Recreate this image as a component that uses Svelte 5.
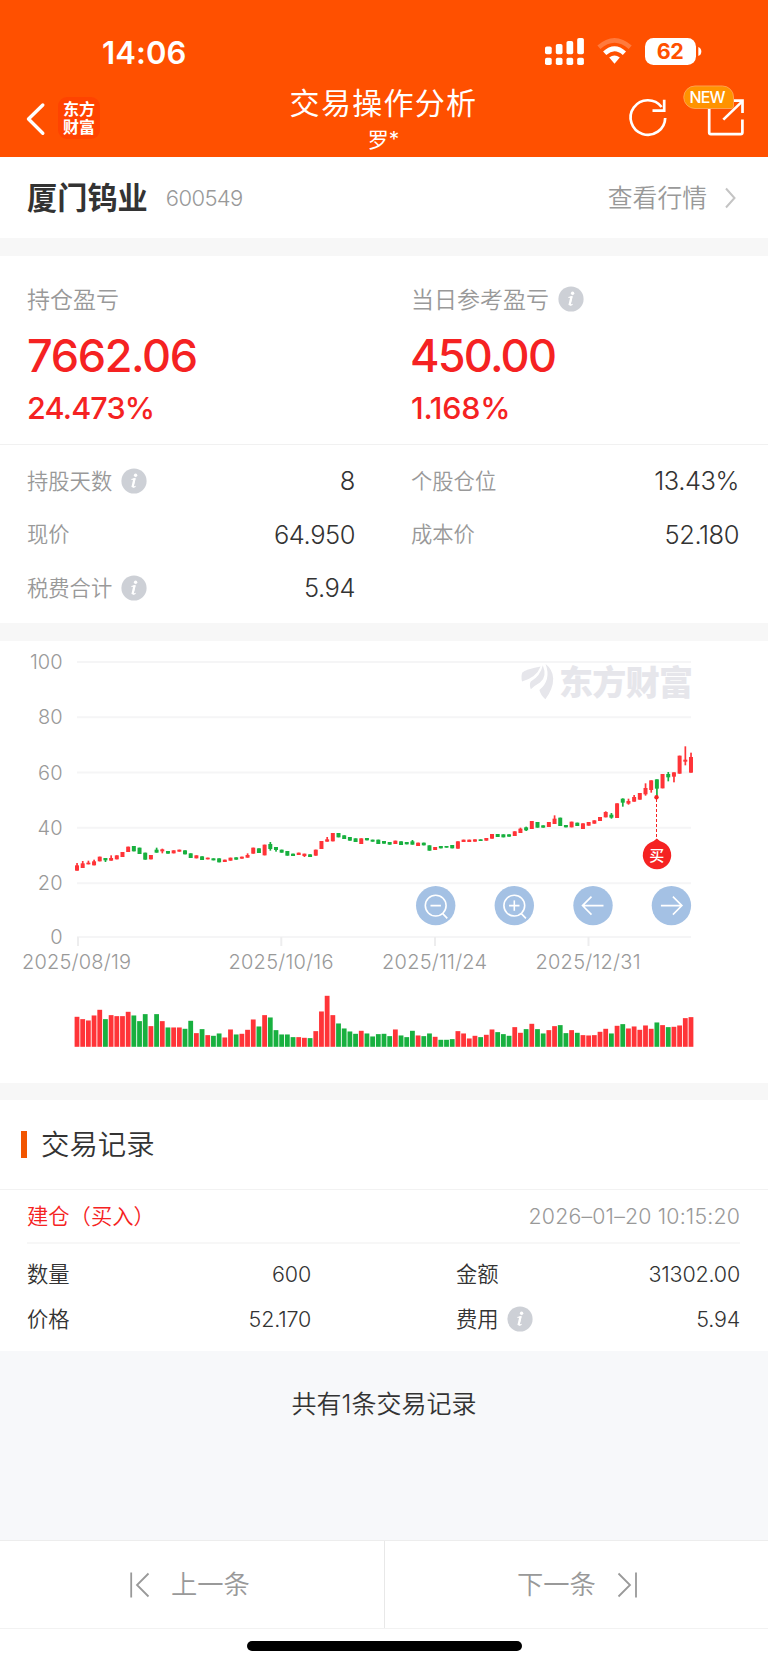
<script>
  // Each day: [direction, volume height, body top, body bottom, wick top, wick bottom]
  // Vertical values are in thirds of a pixel measured from the chart's top edge.
  const days = [
    ['r', 90, 676, 692, 669], ['r', 83, 670, 684, 663], ['r', 79, 668, 673, 662], ['r', 94, 664, 676, 659], ['r', 111, 650, 664],
    ['g', 83, 654, 661, 654, 666], ['r', 95, 654, 662, 646], ['r', 92, 646, 658], ['r', 92, 636, 651], ['r', 105, 620, 636],
    ['g', 94, 618, 634], ['g', 77, 623, 642], ['g', 98, 638, 659], ['r', 62, 645, 658], ['g', 98, 629, 638, 623],
    ['r', 77, 628, 634, 626, 640], ['g', 58, 633, 641], ['r', 58, 631, 640], ['r', 58, 629, 635], ['g', 54, 631, 643],
    ['g', 78, 640, 654], ['r', 41, 646, 655], ['g', 53, 649, 660], ['r', 35, 653, 658], ['g', 33, 655, 661],
    ['g', 40, 655, 667], ['r', 28, 659, 666], ['r', 52, 653, 662], ['g', 37, 652, 659], ['r', 39, 650, 656],
    ['r', 51, 645, 653, 640], ['r', 82, 623, 641], ['g', 61, 625, 639], ['r', 95, 614, 646], ['g', 88, 612, 627, 606, 632],
    ['g', 50, 621, 630, 621, 635], ['g', 37, 629, 638], ['g', 37, 633, 647], ['g', 29, 641, 648], ['r', 29, 638, 645],
    ['r', 27, 641, 648, 641, 651], ['g', 26, 643, 651], ['r', 47, 629, 647], ['r', 106, 603, 627], ['r', 153, 598, 605, 591],
    ['r', 95, 579, 604], ['g', 70, 579, 592], ['g', 55, 586, 597], ['g', 46, 591, 602], ['g', 39, 595, 606],
    ['r', 48, 595, 612], ['g', 40, 594, 601], ['g', 31, 599, 605], ['g', 38, 599, 612], ['g', 39, 603, 611],
    ['g', 32, 606, 614], ['r', 52, 602, 612], ['g', 34, 604, 615], ['g', 29, 606, 613], ['g', 48, 604, 614, 600],
    ['r', 34, 608, 618], ['g', 32, 608, 616], ['g', 40, 616, 632], ['r', 30, 621, 630], ['g', 21, 618, 625],
    ['g', 21, 618, 623], ['g', 23, 615, 625], ['r', 47, 604, 626], ['r', 40, 599, 606], ['r', 25, 599, 606],
    ['r', 33, 598, 605], ['g', 29, 598, 603], ['r', 36, 594, 602], ['r', 52, 582, 596], ['g', 44, 582, 591],
    ['g', 38, 583, 592], ['g', 33, 583, 590], ['r', 59, 574, 588], ['r', 42, 566, 579, 563], ['g', 53, 562, 571, 560, 573],
    ['r', 69, 543, 567], ['g', 53, 546, 563], ['g', 40, 556, 563], ['r', 50, 546, 561], ['r', 62, 536, 552, 526],
    ['g', 65, 533, 558], ['g', 41, 555, 562], ['r', 50, 545, 562], ['g', 42, 548, 558], ['r', 35, 550, 567],
    ['r', 34, 546, 557], ['r', 35, 541, 551], ['r', 45, 531, 543], ['r', 54, 516, 532, 514], ['g', 40, 524, 533, 519, 536],
    ['r', 63, 490, 534], ['g', 68, 476, 488, 475, 500], ['r', 55, 483, 491, 476, 494], ['r', 61, 471, 485, 465], ['r', 51, 459, 479],
    ['r', 64, 444, 463, 430, 467], ['r', 54, 421, 450, 421, 458], ['g', 73, 418, 446, 418, 470], ['r', 65, 402, 445],
    ['g', 59, 402, 412, 396, 424], ['r', 60, 397, 410, 397, 427], ['r', 64, 347, 401], ['r', 86, 359, 365, 319, 376], ['r', 89, 351, 398, 338],
  ];
  const ink = { r: '#ff3438', g: '#18b03f' };
  const bars = days.map(([dir, vol, top, bottom, high = top, low = bottom], i) => ({
    x: 77 + i * 5.685, fill: ink[dir], vol: vol / 3,
    top: top / 3, h: (bottom - top) / 3, high: high / 3, hh: (low - high) / 3,
  }));
  const grid = [['100', 22], ['80', 77.3], ['60', 132.6], ['40', 187.7], ['20', 243.2], ['0', 297]];
  const dates = [['2025/08/19', 78, 76.5, 109], ['2025/10/16', 281.3, 281, 105], ['2025/11/24', 435, 434.6, 105], ['2025/12/31', 588.5, 588, 105]];
  const tools = [['minus', 435.7], ['plus', 514.3], ['left', 593], ['right', 671.4]];
  const stats = [
    ['持股天数', '8', true], ['个股仓位', '13.43%', false],
    ['现价', '64.950', false], ['成本价', '52.180', false],
    ['税费合计', '5.94', true],
  ];
  const record = [
    ['数量', '600', false], ['金额', '31302.00', false],
    ['价格', '52.170', false], ['费用', '5.94', true],
  ];
</script>

{#snippet info()}
  <svg class="info" width="26" height="26" viewBox="0 0 26 26">
    <circle cx="13" cy="13" r="12.6" fill="#cdd0d6" />
    <circle cx="14.6" cy="7.2" r="1.7" fill="#fff" />
    <path d="M10.4 11.6 Q12.2 11 14 10.6 L12 18.6 Q12 19.8 14.6 18.2" fill="none" stroke="#fff" stroke-width="1.1" />
    <path d="M13.5 10.6 L11.5 19.2" stroke="#fff" stroke-width="2.2" />
  </svg>
{/snippet}

<div class="app">
  <header>
    <div class="status">
      <span class="time">14:06</span>
      <svg class="signals" width="160" height="30" viewBox="0 0 160 30" fill="#fff">
        <rect x="1" y="9.5" width="6.7" height="7.8" rx="1.8" /><rect x="11.8" y="7" width="6.7" height="10.3" rx="1.8" />
        <rect x="22.5" y="4" width="6.7" height="13.3" rx="1.8" /><rect x="33.2" y="1" width="6.7" height="16.3" rx="1.8" />
        <rect x="1" y="20.7" width="6.7" height="7.4" rx="1.8" /><rect x="11.8" y="20.7" width="6.7" height="7.4" rx="1.8" />
        <rect x="22.5" y="20.7" width="6.7" height="7.4" rx="1.8" /><rect x="33.2" y="20.7" width="6.7" height="7.4" rx="1.8" />
        <path d="M54.9 10.2 Q70.5 -3.6 86.2 10.2" fill="none" stroke="#ff7a3d" stroke-width="4.6" />
        <path d="M60.7 16.3 Q70.5 7.4 80.4 16.3" fill="none" stroke="#fff" stroke-width="4.8" />
        <path d="M65.2 20.6 Q70.5 16.6 75.8 20.6 L70.5 26.8 Z" />
        <rect x="101" y="1" width="51" height="27" rx="8.5" />
        <path d="M154.3 10 Q157.3 11 157.3 14.5 T154.3 19 Z" />
        <text x="126.3" y="22.3" text-anchor="middle" class="charge" textLength="27">62</text>
      </svg>
    </div>
    <div class="bar">
      <svg class="back" width="22" height="36" viewBox="0 0 22 36"><path d="M16.8 4 L2.5 18 L16.8 32.2" fill="none" stroke="#fff" stroke-width="3.4" stroke-linejoin="round" stroke-linecap="round" /></svg>
      <div class="brand"><span>东方</span><span>财富</span></div>
      <div class="heading"><h1>交易操作分析</h1><p>罗*</p></div>
      <svg class="actions" width="126" height="60" viewBox="0 0 126 60" fill="none" stroke="#fff" stroke-width="2.7">
        <path d="M42.2 34 A17.3 17.3 0 1 1 38.6 23" />
        <path d="M29.5 26.7 H41.2 V15.8" />
        <path d="M86.2 22 V48.5 Q86.2 50.2 87.9 50.2 H117.7 Q119.4 50.2 119.4 48.5 V35.5" />
        <path d="M106 16.7 H119.5 V29" /><path d="M100.3 35.6 L119 17.6" />
        <path d="M72 2 H99.5 A11 11 0 0 1 110.5 13 V22 Q110.5 24.5 108 24.5 H72 A11.25 11.25 0 0 1 72 2 Z" fill="#ff9300" stroke="#ff9f4d" stroke-width="1" />
        <text x="84.6" y="19.4" class="new" text-anchor="middle" textLength="36">NEW</text>
      </svg>
    </div>
  </header>

  <section class="stock">
    <h2>厦门钨业</h2><span class="code">600549</span>
    <span class="quote">查看行情</span>
    <svg width="14" height="24" viewBox="0 0 14 24"><path d="M3 2.5 L11.5 12 L3 21.5" fill="none" stroke="#c4c4c4" stroke-width="2" /></svg>
  </section>

  <section class="profit">
    <div><p>持仓盈亏</p><strong>7662.06</strong><b>24.473%</b></div>
    <div><p>当日参考盈亏{@render info()}</p><strong class="day">450.00</strong><b class="dayrate">1.168%</b></div>
  </section>

  <section class="stats">
    {#each stats as [label, value, hint]}
      <div class="pair"><span>{label}{#if hint}{@render info()}{/if}</span><em>{value}</em></div>
    {/each}
  </section>

  <section class="chart">
    <svg width="768" height="442" viewBox="0 1 768 442">
      {#each grid as [label, y]}
        <path d="M77 {y} H691" stroke="#f5f5f6" stroke-width="2" />
        <text x="62.5" y={y + 7} class="axis" text-anchor="end">{label}</text>
      {/each}
      {#each dates as [label, x, center, len]}
        <path d="M{x} 297 V306" stroke="#ededee" stroke-width="2" />
        <text x={center} y="329" class="axis" text-anchor="middle" textLength={len}>{label}</text>
      {/each}
      <g fill="#e6e6eb">
        <path d="M522 41.6 Q520.8 35 522.5 32.5 Q525 29.6 540.6 26.6 Q536.5 37.5 522 41.6 Z" />
        <path d="M530.8 49.3 Q529 44.5 530.8 41.5 Q540.5 36 542.8 25.3 Q547.5 37 540 42.5 Q534 46 530.8 49.3 Z" />
        <path d="M545.6 24 Q552.8 29.5 553.2 38.5 Q553.3 48.5 545.4 59.3 Q540.5 55 539.4 50 Q551.5 40 545.6 24 Z" />
        <text x="559" y="54.7" class="mark" textLength="134">东方财富</text>
      </g>
      {#each bars as b}
        <rect x={b.x - 2} y={b.top} width="4" height={b.h} fill={b.fill} />
        <rect x={b.x - 0.8} y={b.high} width="1.7" height={b.hh} fill={b.fill} />
        <rect x={b.x - 2.4} y={406.8 - b.vol} width="4.8" height={b.vol} fill={b.fill} />
      {/each}
      <path d="M656.5 159 V200" stroke="#f52222" stroke-width="1" stroke-dasharray="3 2" />
      <circle cx="656.5" cy="157.3" r="2.2" fill="#f52222" />
      <path d="M656.8 198.5 Q659.5 201.5 664 202.7 A14.2 14.2 0 1 1 650 202.7 Q654 201.5 656.8 198.5 Z" fill="#f52222" />
      <text x="656.7" y="220.6" class="buy" text-anchor="middle">买</text>
      {#each tools as [kind, x]}
        <g transform="translate({x} 265.6)" fill="none" stroke="#fff" stroke-width="1.6">
          <circle r="19.7" fill="#a4c1e4" stroke="none" />
          {#if kind === 'minus' || kind === 'plus'}
            <circle r="10.4" /><path d="M-5.2 0 H5.2 M6.8 7.8 L11.6 12.8" />
            {#if kind === 'plus'}<path d="M0 -5.2 V5.2" />{/if}
          {:else if kind === 'left'}
            <path d="M10.5 0 H-10 M-1.5 -9 L-10.5 0 L-1.5 9" />
          {:else}
            <path d="M-10.5 0 H10 M1.5 -9 L10.5 0 L1.5 9" />
          {/if}
        </g>
      {/each}
    </svg>
  </section>

  <section class="title"><i></i><h3>交易记录</h3></section>
  <section class="record">
    <div class="trade"><span>建仓（买入）</span><time>2026–01–20 10:15:20</time></div>
    <div class="fields">
      {#each record as [label, value, hint]}
        <div class="pair"><span>{label}{#if hint}{@render info()}{/if}</span><em>{value}</em></div>
      {/each}
    </div>
  </section>

  <div class="summary">共有1条交易记录</div>

  <nav>
    <button>
      <svg width="22" height="28" viewBox="0 0 22 28"><path d="M2.2 1.5 V26.5 M19.5 2.5 L8 14 L19.5 25.5" fill="none" stroke="#999" stroke-width="1.8" /></svg>
      <span>上一条</span>
    </button>
    <button class="next">
      <span>下一条</span>
      <svg width="22" height="28" viewBox="0 0 22 28"><path d="M20 1.5 V26.5 M2.5 2.5 L14 14 L2.5 25.5" fill="none" stroke="#999" stroke-width="1.8" /></svg>
    </button>
  </nav>
  <div class="home"><i></i></div>
</div>

<style>
  :global(body) { margin: 0; background: #fff; }
  .app { width: 768px; height: 1665px; display: flex; flex-direction: column; overflow: hidden; background: #f7f7f7; color: #333; font-family: Inter, "Noto Sans CJK SC", sans-serif; font-weight: 350; line-height: 1; white-space: nowrap; }
  .app * { box-sizing: border-box; flex-shrink: 0; }
  h1, h2, h3, p { margin: 0; font-weight: inherit; }
  em, i { font-style: normal; }
  svg { display: block; }

  header { height: 157px; background: #ff5000; color: #fff; }
  .status { height: 84px; padding: 37px 64px 0 102px; display: flex; justify-content: space-between; }
  .time { font-size: 31px; font-weight: 600; letter-spacing: 0.1px; }
  .charge { font-size: 21.5px; font-weight: 700; fill: #ff5000; }
  .bar { height: 73px; display: grid; grid-template-columns: 32px 42px 1fr 126px; padding: 0 19px 0 26px; }
  .back { margin-top: 17px; }
  .brand { width: 42px; height: 42px; margin-top: 13px; border-radius: 9px; background: #ff4300; display: flex; flex-direction: column; align-items: center; justify-content: center; gap: 2px; font-size: 16px; font-weight: 700; }
  .heading { padding: 4px 0 0 44px; text-align: center; }
  .heading h1 { font-size: 30px; letter-spacing: 1.3px; font-weight: 400; }
  .heading p { margin-top: 11px; font-size: 21px; font-weight: 400; }
  .new { font-size: 16px; font-weight: 500; fill: #fff; stroke: none; }

  .stock { height: 81px; padding: 0 31px 0 27px; display: flex; align-items: center; background: #fff; color: #999; }
  .stock h2 { padding-top: 2px; font-size: 30.2px; font-weight: 600; color: #333; }
  .code { margin-left: 18px; font-size: 22px; letter-spacing: -0.6px; }
  .quote { margin: 0 16px 0 auto; padding-top: 1px; font-size: 24.8px; }

  .profit { height: 189px; margin-top: 18px; padding: 28px 27px 0; background: #fff; display: grid; grid-template-columns: 384px 1fr; border-bottom: 1px solid #f1f1f1; }
  .profit p { height: 32px; display: flex; align-items: center; color: #999; font-size: 23px; }
  .profit p .info { margin-bottom: 2px; }
  .profit strong, .profit b { display: block; color: #f52222; font-weight: 500; }
  .profit strong { margin-top: 17px; font-size: 45px; letter-spacing: -1.35px; }
  .profit .day { margin-left: -1px; letter-spacing: -1.75px; }
  .profit b { margin-top: 15px; font-size: 30.5px; letter-spacing: -0.8px; }
  .profit .dayrate { letter-spacing: -0.2px; }
  .info { margin-left: 9px; }

  .stats { height: 178px; padding: 9px 29px 0 27px; background: #fff; display: grid; grid-template-columns: 328px 328px; column-gap: 56px; grid-auto-rows: 53.6px; align-content: start; }
  .pair { display: flex; align-items: center; justify-content: space-between; }
  .pair span { display: flex; align-items: center; padding-top: 1px; color: #999; font-size: 21.3px; }
  .pair em { font-size: 25.5px; letter-spacing: -0.45px; }

  .chart { height: 442px; margin-top: 18px; background: #fff; }
  .axis { font-size: 20px; font-weight: 350; fill: #999; }
  .mark { font-size: 34px; font-weight: 900; }
  .buy { font-size: 15px; font-weight: 500; fill: #fff; }

  .title { height: 90px; margin-top: 17px; padding-left: 21px; display: flex; align-items: center; background: #fff; border-bottom: 1px solid #f2f2f2; }
  .title i { width: 6px; height: 27px; background: #f25500; }
  .title h3 { margin-left: 14px; padding-top: 1px; font-size: 28.4px; }
  .record { height: 161px; padding: 0 28px 0 27px; background: #fff; }
  .trade { height: 54px; padding-top: 1px; display: flex; align-items: center; justify-content: space-between; border-bottom: 2px solid #f7f7f7; font-size: 21.3px; }
  .trade span { color: #f52222; }
  .trade time { color: #999; letter-spacing: 0.18px; }
  .fields { padding-top: 8px; display: grid; grid-template-columns: 284px 284px; justify-content: space-between; grid-auto-rows: 45px; }
  .fields .pair span { color: #333; padding-top: 0; }
  .fields .pair em { font-size: 21.5px; letter-spacing: -0.2px; }
  .fields .info { margin: 0 0 1px 8px; }

  .summary { height: 189px; padding-top: 41px; text-align: center; background: #f7f8fa; font-size: 25px; }
  nav { height: 89px; display: grid; grid-template-columns: 384px 384px; background: #fff; border-top: 1px solid #ededed; border-bottom: 1px solid #f2f2f2; }
  nav button { display: flex; align-items: center; gap: 20px; padding: 0 0 0 129px; border: 0; background: none; color: #999; font: inherit; font-size: 26.3px; }
  nav button span { padding-top: 2px; }
  nav .next { padding-left: 132px; border-left: 1px solid #e8e8e8; }
  .home { flex: 1 0 0; padding-top: 12px; background: #fff; }
  .home i { display: block; width: 275px; height: 10px; margin: 0 auto; border-radius: 5px; background: #000; }
</style>
